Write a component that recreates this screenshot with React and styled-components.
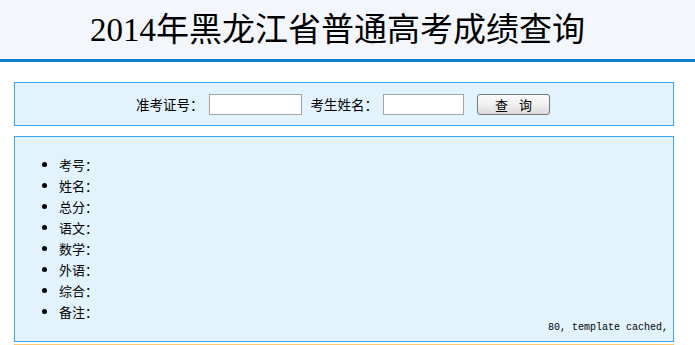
import React from "react";
import styled, { createGlobalStyle } from "styled-components";

const GlobalStyle = createGlobalStyle`
  body {
    margin: 0;
    background: #ffffff;
    font-family: "Noto Sans CJK SC", "Liberation Sans", sans-serif;
    font-size: 13px;
    color: #000;
  }
`;

const Header = styled.div`
  height: 59px;
  background: #f3f7fb;
  border-bottom: 3px solid #0a80c8;
  display: flex;
  align-items: center;
  justify-content: center;
  padding-right: 20px;
`;

const Title = styled.h1`
  margin: 0;
  font-family: "Liberation Serif", "Noto Sans CJK SC", serif;
  font-size: 33px;
  font-weight: normal;
  line-height: 40px;
`;

const Main = styled.div`
  width: 660px;
  margin: 20px 0 0 14px;
  display: flex;
  flex-direction: column;
  gap: 10px;
`;

const Panel = styled.div`
  background: #e2f3fd;
  border: 1px solid #3aa8f2;
`;

const SearchRow = styled.form`
  height: 42px;
  display: flex;
  align-items: center;
  justify-content: center;
  padding-right: 2px;
`;

const Label = styled.label`
  font-size: 13.5px;
  line-height: 16px;
  margin-right: 5px;
`;

const Input = styled.input`
  box-sizing: border-box;
  width: ${(p) => p.w}px;
  height: 21px;
  margin: 0 ${(p) => p.after}px 0 0;
  padding: 1px 3px;
  border: 1px solid #a5a5a5;
  background: #fff;
  outline: none;
`;

const Button = styled.button`
  box-sizing: border-box;
  width: 73px;
  height: 21px;
  padding: 0;
  border: 1px solid #777;
  border-radius: 3px;
  background: linear-gradient(#fbfbfb, #f2f2f2 45%, #dadada);
  font-family: "Noto Sans CJK SC", sans-serif;
  font-size: 13px;
  line-height: 17px;
  word-spacing: 8px;
  color: #000;
`;

const ResultPanel = styled(Panel)`
  height: 204px;
  display: flex;
  flex-direction: column;
`;

const List = styled.ul`
  margin: 17px 0 0;
  padding: 0 0 0 44px;
  list-style: disc;
`;

const Item = styled.li`
  height: 21px;
  line-height: 21px;
  font-size: 13px;
`;

const Note = styled.div`
  margin-top: auto;
  padding: 0 5px 8px 0;
  text-align: right;
  font-family: "Liberation Mono", monospace;
  font-size: 10px;
  line-height: 12px;
`;

const Footer = styled.div`
  width: 660px;
  margin: 2px 0 0 14px;
  border-top: 2px solid #ffc977;
`;

const fields = ["考号", "姓名", "总分", "语文", "数学", "外语", "综合", "备注"];

export default function App() {
  return (
    <>
      <GlobalStyle />
      <Header>
        <Title>2014年黑龙江省普通高考成绩查询</Title>
      </Header>
      <Main>
        <Panel>
          <SearchRow onSubmit={(e) => e.preventDefault()}>
            <Label>准考证号：</Label>
            <Input w={93} after={9} />
            <Label>考生姓名：</Label>
            <Input w={81} after={13} />
            <Button type="submit">查 询</Button>
          </SearchRow>
        </Panel>
        <ResultPanel>
          <List>
            {fields.map((f) => (
              <Item key={f}>{f}：</Item>
            ))}
          </List>
          <Note>80, template cached,</Note>
        </ResultPanel>
      </Main>
      <Footer />
    </>
  );
}
